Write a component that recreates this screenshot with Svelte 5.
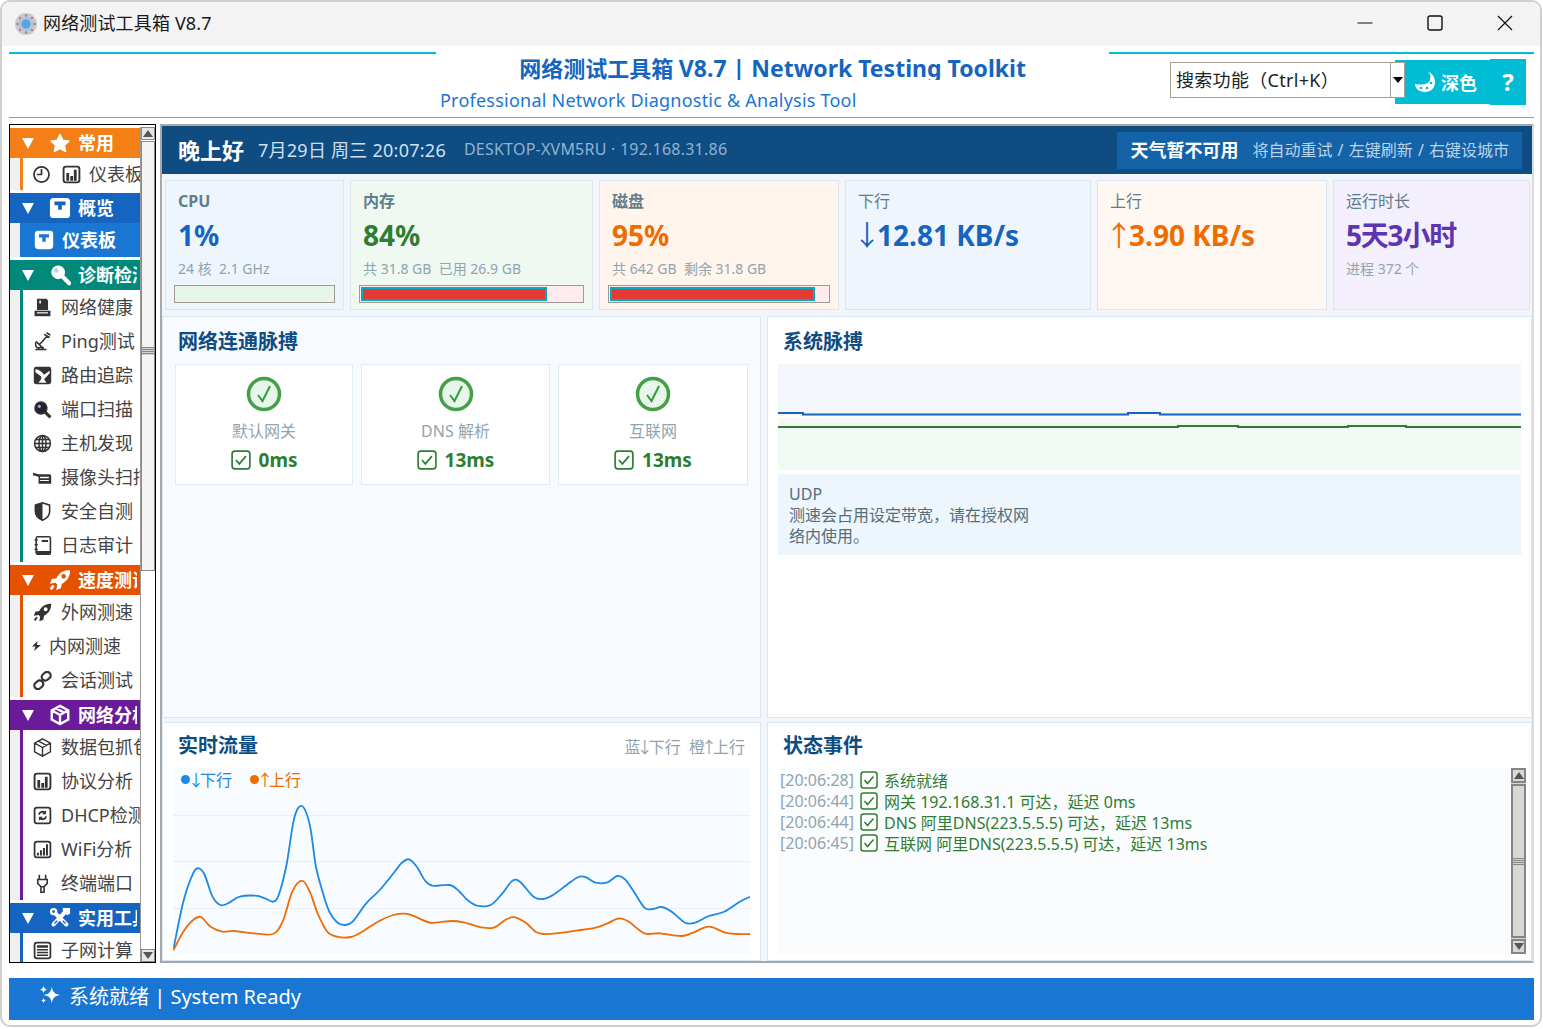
<script>
  const ICONS = {
    star: '<path fill="currentColor" stroke="currentColor" stroke-width="2" stroke-linejoin="round" d="M12 3l2.800 6.200 6.700.7-5 4.500 1.400 6.600L12 17.600 6.100 21l1.400-6.600-5-4.500 6.700-.7z"/>',
    box: '<path fill="currentColor" fill-rule="evenodd" d="M5 1h14a4 4 0 0 1 4 4v14a4 4 0 0 1-4 4H5a4 4 0 0 1-4-4V5a4 4 0 0 1 4-4zm1 4v4h4v5h4V9h4V5z"/>',
    search: '<circle cx="10" cy="9" r="7.500" fill="currentColor"/><circle cx="8" cy="7" r="2.500" fill="#b8d8d4"/><path d="M15 14l7 7" stroke="currentColor" stroke-width="4.500" stroke-linecap="round"/>',
    rocket: '<path fill="currentColor" fill-rule="evenodd" d="M23 1c-7 0-12 3-15 9l-5 1-2 5 6-1 2 2-1 6 5-2 1-5c6-3 9-8 9-15zm-7 4.500a2.500 2.500 0 1 1 0 5 2.500 2.500 0 0 1 0-5z"/><path d="M5 18l-3 4" stroke="currentColor" stroke-width="3"/>',
    cube: '<path fill="none" stroke="currentColor" stroke-width="2.600" d="M12 2l9 5v10l-9 5-9-5V7zM3 7l9 5 9-5M12 12v10M7.500 4.500l9 5"/>',
    tools: '<path fill="none" stroke="currentColor" stroke-width="4.500" stroke-linecap="round" d="M6 6l13 13M19 4L5 19"/><circle cx="5" cy="5" r="4" fill="currentColor"/><path fill="currentColor" d="M15 1h8v6l-3 2-5-5z"/><circle cx="5" cy="5" r="1.500" fill="#1565c0"/><path stroke="#1565c0" stroke-width="1.500" d="M9 15l-3 3M15 15l3 3"/>',
    clock: '<circle cx="12" cy="12" r="9.500" fill="none" stroke="currentColor" stroke-width="2.200"/><path d="M12 5v7H6" fill="none" stroke="currentColor" stroke-width="2.200"/>',
    bars: '<rect x="2" y="2" width="20" height="20" rx="3" fill="#fff" stroke="currentColor" stroke-width="2.400"/><path fill="currentColor" d="M5.500 10h3.500v10H5.500zM10.500 14h3.500v6h-3.500zM15 6h3.500v14H15z"/>',
    disk: '<path fill="currentColor" d="M5 1h12l2 2v12H5z"/><path fill="#fff" d="M8 3h2v4H8z"/><path fill="currentColor" d="M2 16h20v7H2z"/><path fill="#fff" d="M5 18h14v1.500H5z"/>',
    dish: '<path fill="none" stroke="currentColor" stroke-width="2" d="M4 12l9 9M4 12c-2 5 0 8 3 8s6-2 6 1M8 16L18 5M3 22h14M14 3l7 4M17 1l5 3"/>',
    pic: '<rect x="1" y="1" width="22" height="22" rx="3" fill="currentColor"/><path fill="#fff" d="M3 4c6 1 9 4 11 7l7-5v3l-9 10-2-6-7-5z"/><path fill="#fff" d="M12 14l-5 7h10z"/>',
    mag: '<circle cx="10" cy="10" r="7.500" fill="#223" stroke="currentColor" stroke-width="2"/><circle cx="8" cy="8" r="2" fill="#aab"/><path d="M15 15l7 7" stroke="currentColor" stroke-width="4"/>',
    globe: '<g fill="none" stroke="currentColor" stroke-width="1.900"><circle cx="12" cy="12" r="10"/><ellipse cx="12" cy="12" rx="4.500" ry="10"/><path d="M12 2v20M2 12h20M3.500 7h17M3.500 17h17"/></g>',
    cam: '<path fill="currentColor" d="M0 6l7 2h14a2 2 0 0 1 2 2v10H7v-9L0 9z"/><path fill="#fff" d="M9 11h11v2H9zM9 15h11v1.500H9z"/>',
    shield: '<path fill="#fff" stroke="currentColor" stroke-width="2" d="M12 1l9 3v8c0 5-4 9-9 11-5-2-9-6-9-11V4z"/><path fill="currentColor" d="M12 1v22c-5-2-9-6-9-11V4z"/>',
    book: '<rect x="4" y="1" width="18" height="22" rx="2" fill="none" stroke="currentColor" stroke-width="2"/><path fill="currentColor" d="M11 5h8v2.500h-8zM2 4h4v2H2zM2 10h4v2H2zM2 16h4v2H2zM5 19h17v4H5z"/>',
    rocketd: '<path fill="currentColor" fill-rule="evenodd" d="M23 1c-7 0-12 3-15 9l-5 1-2 5 6-1 2 2-1 6 5-2 1-5c6-3 9-8 9-15zm-7 4.500a2.500 2.500 0 1 1 0 5 2.500 2.500 0 0 1 0-5z"/><path d="M5 18l-3 4" stroke="currentColor" stroke-width="2.400"/>',
    bolt: '<path fill="currentColor" d="M13 2L2 13h7l-3 9 14-12h-8z"/>',
    link: '<g fill="none" stroke="currentColor" stroke-width="2.800"><rect x="11" y="2" width="12" height="9" rx="4.500" transform="rotate(-40 17 7)"/><rect x="1" y="13" width="12" height="9" rx="4.500" transform="rotate(-40 7 17)"/></g>',
    cubed: '<path fill="none" stroke="currentColor" stroke-width="1.800" d="M12 1l10 5.500v11L12 23 2 17.500v-11zM2 6.500L12 12l10-5.500M12 12v11M7 3.800l10 5.500"/>',
    sync: '<rect x="2" y="2" width="20" height="20" rx="3" fill="#fff" stroke="currentColor" stroke-width="2.200"/><path fill="none" stroke="currentColor" stroke-width="2.400" d="M7.500 11a4.500 4.500 0 0 1 8-2M16.500 13a4.500 4.500 0 0 1-8 2"/><path fill="currentColor" d="M16.500 5.500v5h-5zM7.500 18.500v-5h5z"/>',
    signal: '<rect x="2" y="2" width="20" height="20" rx="3" fill="#fff" stroke="currentColor" stroke-width="2.200"/><path fill="currentColor" d="M5 16h2.500v3.500H5zM8.800 13h2.500v6.500H8.800zM12.600 10h2.500v9.500h-2.500zM16.400 5.500h2.500v14h-2.500z"/>',
    plug: '<path fill="none" stroke="currentColor" stroke-width="2" d="M8 1v6M16 1v6M6 7h12v5l-4 4h-4l-4-4zM10 16v7h4v-7"/>',
    table: '<rect x="2" y="2" width="20" height="20" rx="3" fill="#fff" stroke="currentColor" stroke-width="2.200"/><path fill="currentColor" d="M5 5.500h14v3H5zM5 10h14v2H5zM5 13.500h14v2H5zM5 17h14v2H5z"/>'
  };

  const groups = [
    { name: "常用", color: "#f57f17", icon: "star", items: [{ t: "仪表板", ic: "bars", pre: "clock" }] },
    { name: "概览", color: "#1565c0", icon: "box", items: [{ t: "仪表板", ic: "box", active: true }] },
    { name: "诊断检测", color: "#00897b", icon: "search", items: [
      { t: "网络健康", ic: "disk" }, { t: "Ping测试", ic: "dish" }, { t: "路由追踪", ic: "pic" },
      { t: "端口扫描", ic: "mag" }, { t: "主机发现", ic: "globe" }, { t: "摄像头扫描", ic: "cam" },
      { t: "安全自测", ic: "shield" }, { t: "日志审计", ic: "book" } ] },
    { name: "速度测试", color: "#e65100", icon: "rocket", items: [
      { t: "外网测速", ic: "rocketd" }, { t: "内网测速", ic: "bolt", small: true }, { t: "会话测试", ic: "link" } ] },
    { name: "网络分析", color: "#6a1b9a", icon: "cube", items: [
      { t: "数据包抓包", ic: "cubed" }, { t: "协议分析", ic: "bars" }, { t: "DHCP检测", ic: "sync" },
      { t: "WiFi分析", ic: "signal" }, { t: "终端端口", ic: "plug" } ] },
    { name: "实用工具", color: "#1565c0", icon: "tools", items: [{ t: "子网计算", ic: "table" }] }
  ];

  const stats = [
    { label: "CPU", val: "1%", cls: "blue", bg: "bg-blue", sub: "24 核  2.1 GHz", bar: 0, heavy: true },
    { label: "内存", val: "84%", cls: "green", bg: "bg-green", sub: "共 31.8 GB  已用 26.9 GB", bar: 84, heavy: true },
    { label: "磁盘", val: "95%", cls: "orange", bg: "bg-orange", sub: "共 642 GB  剩余 31.8 GB", bar: 94, heavy: true },
    { label: "下行", val: "12.81 KB/s", arrow: "↓", cls: "blue", bg: "bg-blue" },
    { label: "上行", val: "3.90 KB/s", arrow: "↑", cls: "orange", bg: "bg-peach" },
    { label: "运行时长", val: "5天3小时", cls: "purple", bg: "bg-purple", sub: "进程 372 个" }
  ];

  const pings = [
    { name: "默认网关", ms: "0ms" },
    { name: "DNS 解析", ms: "13ms" },
    { name: "互联网", ms: "13ms" }
  ];

  const events = [
    { time: "[20:06:28]", msg: "系统就绪" },
    { time: "[20:06:44]", msg: "网关 192.168.31.1 可达，延迟 0ms" },
    { time: "[20:06:44]", msg: "DNS 阿里DNS(223.5.5.5) 可达，延迟 13ms" },
    { time: "[20:06:45]", msg: "互联网 阿里DNS(223.5.5.5) 可达，延迟 13ms" }
  ];

  // points read off the reference, in screen pixels relative to the chart box
  const downRaw = [[35,670],[60,530],[85,445],[100,430],[115,450],[135,515],[155,540],[175,535],[205,515],[245,512],[270,520],[290,530],[305,510],[325,420],[345,280],[365,243],[385,300],[400,420],[415,490],[435,560],[455,592],[475,600],[495,590],[530,535],[565,495],[600,445],[620,415],[640,403],[660,425],[680,465],[700,482],[745,480],[770,500],[790,525],[815,542],[850,540],[880,505],[905,468],[925,470],[960,515],[985,522],[1010,510],[1045,480],[1075,456],[1095,457],[1120,473],[1150,472],[1175,453],[1195,463],[1215,495],[1245,548],[1265,552],[1290,546],[1315,560],[1350,593],[1375,593],[1410,573],[1450,560],[1490,530],[1517,515]];
  const upRaw = [[35,675],[60,620],[85,585],[105,576],[130,605],[160,620],[190,618],[240,625],[290,627],[315,590],[340,500],[365,467],[385,500],[405,565],[430,620],[455,635],[490,636],[520,620],[560,590],[600,570],[630,566],[650,572],[690,592],[715,592],[750,588],[780,592],[830,608],[860,607],[890,583],[912,577],[940,593],[965,620],[985,627],[1020,625],[1070,617],[1120,608],[1150,595],[1180,580],[1205,590],[1245,625],[1285,625],[1340,633],[1370,623],[1410,605],[1450,622],[1480,627],[1517,627]];

  function smooth(raw) {
    const p = raw.map(([x, y]) => [x / 2.57 + 160 - 173, y / 3 + 725 - 768]);
    let d = `M${p[0][0].toFixed(1)} ${p[0][1].toFixed(1)}`;
    for (let i = 0; i < p.length - 1; i++) {
      const a = p[Math.max(i - 1, 0)], b = p[i], c = p[i + 1], e = p[Math.min(i + 2, p.length - 1)];
      const c1 = [b[0] + (c[0] - a[0]) / 6, b[1] + (c[1] - a[1]) / 6];
      const c2 = [c[0] - (e[0] - b[0]) / 6, c[1] - (e[1] - b[1]) / 6];
      d += `C${c1[0].toFixed(1)} ${c1[1].toFixed(1)} ${c2[0].toFixed(1)} ${c2[1].toFixed(1)} ${c[0].toFixed(1)} ${c[1].toFixed(1)}`;
    }
    return d;
  }
  const downPath = smooth(downRaw);
  const upPath = smooth(upRaw);
</script>

{#snippet icon(name, size)}
  <svg class="ic" width={size} height={size} viewBox="0 0 24 24">{@html ICONS[name]}</svg>
{/snippet}

{#snippet tick(size)}
  <svg class="ic" width={size} height={size} viewBox="0 0 18 18">
    <rect x="1" y="1" width="16" height="16" rx="2.500" fill="#fff" stroke="#2e7d32" stroke-width="1.500"/>
    <path d="M4.500 9l3 3.500 6-7" fill="none" stroke="#2e7d32" stroke-width="1.500"/>
  </svg>
{/snippet}

{#snippet arrowUp()}
  <svg width="10" height="7" viewBox="0 0 10 7"><path d="M5 0l5 7H0z" fill="#555"/></svg>
{/snippet}

{#snippet arrowDown()}
  <svg width="10" height="7" viewBox="0 0 10 7"><path d="M0 0h10L5 7z" fill="#555"/></svg>
{/snippet}

<div class="window">
  <div class="titlebar">
    <svg class="logo" width="24" height="24" viewBox="0 0 24 24">
      <circle cx="12" cy="12" r="11" fill="#c3ccd6"/>
      <circle cx="12" cy="12" r="7.500" fill="#a9c6de"/>
      <circle cx="12" cy="12" r="4.500" fill="#5ba3d9"/>
      <g fill="#e06a6a">
        <circle cx="12" cy="3.500" r="1.200"/><circle cx="12" cy="20.500" r="1.200"/>
        <circle cx="3.500" cy="12" r="1.200"/><circle cx="20.500" cy="12" r="1.200"/>
        <circle cx="6" cy="6" r="1.200"/><circle cx="18" cy="6" r="1.200"/>
        <circle cx="6" cy="18" r="1.200"/><circle cx="18" cy="18" r="1.200"/>
      </g>
    </svg>
    <span class="wintitle">网络测试工具箱 V8.7</span>
    <div class="winbtns">
      <svg width="16" height="16" viewBox="0 0 16 16"><path d="M0.500 8h15" stroke="#111" stroke-width="1.200"/></svg>
      <svg width="16" height="16" viewBox="0 0 16 16"><rect x="1" y="1" width="14" height="14" rx="2" fill="none" stroke="#111" stroke-width="1.400"/></svg>
      <svg width="16" height="16" viewBox="0 0 16 16"><path d="M1 1l14 14M15 1L1 15" stroke="#111" stroke-width="1.200"/></svg>
    </div>
  </div>

  <div class="client">
    <header class="head">
      <div class="side-left"></div>
      <div class="brand">
        <div class="brand-title">网络测试工具箱 <span class="brand-latin">V8.7 | Network Testing Toolkit</span></div>
        <div class="brand-sub">Professional Network Diagnostic &amp; Analysis Tool</div>
      </div>
      <div class="side-right">
        <div class="combo">
          <span class="combo-text">搜索功能（Ctrl+K）</span>
          <span class="combo-btn"><svg width="10" height="6" viewBox="0 0 10 6"><path d="M0 0h10L5 6z" fill="#000"/></svg></span>
        </div>
        <div class="btn-theme">
          <svg width="24" height="24" viewBox="0 0 24 24"><path fill="#fff" d="M15 2c3 2 3 7 1 10-3 3-9 3-14 2 0 5 5 8 10 8 6 0 10-4 10-10 0-5-3-9-7-10z"/><circle cx="8" cy="18" r="1.300" fill="#00bcd4"/><circle cx="14" cy="18" r="1.300" fill="#00bcd4"/><circle cx="18" cy="13" r="1.300" fill="#00bcd4"/></svg>
          <span>深色</span>
        </div>
        <div class="btn-help">?</div>
      </div>
    </header>

    <div class="main">
      <nav class="sidebar">
        <div class="nav-list">
          {#each groups as g}
            <div class="grp" style="--c:{g.color}">
              <div class="grp-head">
                <svg class="tri" width="12" height="11" viewBox="0 0 12 11"><path d="M0 0h12L6 11z" fill="#fff"/></svg>
                {@render icon(g.icon, 22)}
                <span class="grp-name">{g.name}</span>
              </div>
              <div class="grp-items">
                {#each g.items as it}
                  {#if it.active}
                    <div class="item active">{@render icon(it.ic, 20)}<span>{it.t}</span></div>
                  {:else}
                    <div class="item" class:short={it.pre} class:small={it.small}>
                      {#if it.pre}{@render icon(it.pre, 19)}{/if}
                      {@render icon(it.ic, it.small ? 12 : 19)}
                      <span>{it.t}</span>
                    </div>
                  {/if}
                {/each}
              </div>
            </div>
          {/each}
        </div>
        <div class="vbar nav-bar">
          <div class="vbtn">{@render arrowUp()}</div>
          <div class="vthumb"><i></i></div>
          <div class="vrest"></div>
          <div class="vbtn">{@render arrowDown()}</div>
        </div>
      </nav>

      <section class="content">
        <div class="banner">
          <strong class="greet">晚上好</strong>
          <span class="clock">7月29日 周三 20:07:26</span>
          <span class="host">DESKTOP-XVM5RU · 192.168.31.86</span>
          <div class="weather">
            <strong>天气暂不可用</strong>
            <span>将自动重试 / 左键刷新 / 右键设城市</span>
          </div>
        </div>

        <div class="stats">
          {#each stats as s}
            <div class="stat {s.bg}">
              <div class="stat-label" class:heavy={s.heavy}>{s.label}</div>
              <div class="stat-val {s.cls}">{#if s.arrow}<span class="arr">{s.arrow}</span> {/if}{s.val}</div>
              {#if s.sub}<div class="stat-sub">{s.sub}</div>{/if}
              {#if s.bar !== undefined}
                <div class="track" class:ok={s.bar === 0}>
                  {#if s.bar > 0}<div class="fill" style="width:{s.bar}%"></div>{/if}
                </div>
              {/if}
            </div>
          {/each}
        </div>

        <div class="grid">
          <div class="panel tint">
            <h2>网络连通脉搏</h2>
            <div class="pings">
              {#each pings as p}
                <div class="ping">
                  <svg width="36" height="36" viewBox="0 0 36 36">
                    <circle cx="18" cy="18" r="15.500" fill="#e8f5e9" stroke="#43a047" stroke-width="3.500"/>
                    <path d="M12 19l4.500 6L24 10" fill="none" stroke="#2e9e3e" stroke-width="2"/>
                  </svg>
                  <div class="ping-name">{p.name}</div>
                  <div class="ping-ms">{@render tick(20)}<span>{p.ms}</span></div>
                </div>
              {/each}
            </div>
          </div>

          <div class="panel">
            <h2>系统脉搏</h2>
            <svg class="pulse" width="743" height="106" viewBox="0 0 743 106">
              <rect width="743" height="52" fill="#f4f7fc"/>
              <rect y="54" width="743" height="52" fill="#f2f8f2"/>
              <path d="M0 49H25V50.500H350V49H382V50.500H743" fill="none" stroke="#1565c0" stroke-width="2"/>
              <path d="M0 63H400V62H460V63H570V62H628V63H743" fill="none" stroke="#2e7d32" stroke-width="2"/>
            </svg>
            <div class="note">
              UDP<br/>
              <span class="note-text">测速会占用设定带宽，请在授权网络内使用。</span>
            </div>
          </div>

          <div class="panel">
            <div class="panel-head">
              <h2 class="low">实时流量</h2>
              <span class="hint">蓝<span class="na">↓</span>下行  橙<span class="na">↑</span>上行</span>
            </div>
            <div class="traffic">
              <div class="legend">
                <span class="lg-down"><i></i><span class="na">↓</span>下行</span>
                <span class="lg-up"><i></i><span class="na">↑</span>上行</span>
              </div>
              <svg width="577" height="186" viewBox="0 0 577 186">
                <path d="M0 47.500H577M0 93.500H577M0 140.500H577" stroke="#eaeff5" stroke-width="1"/>
                <path d={downPath} fill="none" stroke="#1e88e5" stroke-width="1.800"/>
                <path d={upPath} fill="none" stroke="#ef6c00" stroke-width="1.800"/>
              </svg>
            </div>
          </div>

          <div class="panel">
            <h2 class="low">状态事件</h2>
            <div class="log">
              <div class="log-lines">
                {#each events as e}
                  <div class="log-line">
                    <span class="log-time">{e.time}</span>
                    {@render tick(18)}
                    <span class="log-msg">{e.msg}</span>
                  </div>
                {/each}
              </div>
              <div class="vbar log-bar">
                <div class="vbtn">{@render arrowUp()}</div>
                <div class="vthumb"><i></i></div>
                <div class="vbtn">{@render arrowDown()}</div>
              </div>
            </div>
          </div>
        </div>
      </section>
    </div>

    <footer class="status">
      <svg width="22" height="22" viewBox="0 0 24 24"><path fill="#fff" d="M14 3c1 6 3 8 9 9-6 1-8 3-9 9-1-6-3-8-9-9 6-1 8-3 9-9zM5 2c.5 2.500 1.500 3.500 4 4-2.500.5-3.500 1.500-4 4-.5-2.500-1.500-3.500-4-4 2.500-.5 3.500-1.500 4-4zM5 15c.5 2 1 2.500 3 3-2 .5-2.500 1-3 3-.5-2-1-2.500-3-3 2-.5 2.500-1 3-3z"/></svg>
      <span>系统就绪 | System Ready</span>
    </footer>
  </div>
</div>

<style>
  :global(body) {
    margin: 0;
    background: #fff;
  }

  .window {
    box-sizing: border-box;
    height: 1027px;
    width: 1542px;
    border: 2px solid #cfcfcf;
    border-radius: 10px;
    overflow: hidden;
    display: flex;
    flex-direction: column;
    background: #fff;
    font-family: "Noto Sans", "Noto Sans CJK SC", sans-serif;
    color: #222;
  }

  .ic {
    flex: none;
    display: block;
  }

  .na {
    margin: 0 -4px;
  }

  .titlebar {
    height: 44px;
    flex: none;
    background: #f3f3f3;
    display: flex;
    align-items: center;
    padding-left: 12px;
  }

  .logo {
    margin-right: 5px;
    filter: blur(0.4px);
  }

  .wintitle {
    font-size: 18px;
    color: #1a1a1a;
    padding-bottom: 4px;
    letter-spacing: 0.15px;
  }

  .winbtns {
    margin-left: auto;
    margin-right: 27px;
    margin-bottom: 2px;
    display: flex;
    gap: 54px;
  }

  .client {
    flex: 1;
    min-height: 0;
    display: flex;
    flex-direction: column;
    padding: 0 6px 0 7px;
  }

  .head {
    height: 71px;
    flex: none;
    display: flex;
    border-bottom: 1px solid #999;
    margin-bottom: 6px;
  }

  .side-left {
    width: 427px;
    height: 6px;
    border-bottom: 2px solid #00bcd4;
    flex: none;
  }

  .brand {
    flex: 1;
    min-width: 0;
    padding-top: 7px;
  }

  .brand-title {
    height: 27px;
    line-height: 30px;
    overflow: hidden;
    text-align: center;
    font-size: 22px;
    font-weight: 700;
    color: #1565c0;
    white-space: nowrap;
  }

  .brand-latin {
    font-size: 23px;
  }

  .brand-sub {
    margin-top: 7px;
    padding-left: 4px;
    font-size: 18px;
    line-height: 26px;
    letter-spacing: 0.23px;
    color: #1976d2;
    white-space: nowrap;
  }

  .side-right {
    width: 425px;
    flex: none;
    box-sizing: border-box;
    border-top: 2px solid #00bcd4;
    margin-top: 6px;
    padding: 6px 8px 0 61px;
    display: flex;
    align-items: flex-start;
    height: 60px;
  }

  .combo {
    width: 235px;
    height: 36px;
    margin-top: 2px;
    flex: none;
    box-sizing: border-box;
    border: 1px solid #a59f98;
    background: #fff;
    display: flex;
    position: relative;
    z-index: 1;
    margin-right: -10px;
  }

  .combo-text {
    flex: 1;
    font-size: 18px;
    line-height: 34px;
    padding-left: 5px;
    letter-spacing: 0.3px;
    color: #222;
    white-space: nowrap;
  }

  .combo-btn {
    width: 13px;
    border-left: 1px solid #a59f98;
    display: flex;
    align-items: center;
    justify-content: center;
    background: #fff;
  }

  .btn-theme {
    width: 95px;
    height: 44px;
    background: #00bcd4;
    color: #fff;
    font-size: 18px;
    font-weight: 700;
    display: flex;
    align-items: center;
    gap: 4px;
    padding-left: 18px;
    box-sizing: border-box;
    flex: none;
  }

  .btn-help {
    width: 36px;
    height: 46px;
    margin-top: -1px;
    background: #00bcd4;
    color: #fff;
    font-size: 24px;
    font-weight: 700;
    line-height: 46px;
    text-align: center;
    flex: none;
  }

  .main {
    flex: none;
    height: 839px;
    display: flex;
    gap: 4px;
  }

  .sidebar {
    width: 147px;
    flex: none;
    box-sizing: border-box;
    border: 1px solid #000;
    display: flex;
    background: #fff;
    overflow: hidden;
  }

  .nav-list {
    width: 130px;
    flex: none;
    overflow: hidden;
    padding-top: 3px;
  }

  .grp {
    margin-bottom: 3px;
  }

  .grp-head {
    height: 30px;
    background: var(--c);
    color: #fff;
    display: flex;
    align-items: center;
    padding-left: 12px;
    font-size: 18px;
    font-weight: 700;
    white-space: nowrap;
    overflow: hidden;
    padding-right: 3px;
  }

  .tri {
    margin-right: 15px;
    flex: none;
  }

  .grp-name {
    margin-left: 7px;
    padding-bottom: 2px;
    flex: 1;
    min-width: 0;
    overflow: hidden;
  }

  .grp-items {
    padding-left: 10px;
    background: #f0f0f0;
  }

  .item {
    height: 34px;
    border-left: 3px solid var(--c);
    background: #fff;
    display: flex;
    align-items: center;
    padding-left: 10px;
    gap: 9px;
    font-size: 18px;
    color: #444;
    white-space: nowrap;
    overflow: hidden;
  }

  .item .ic {
    color: #333;
  }

  .item span {
    padding-bottom: 2px;
  }

  .item.short {
    height: 32px;
    padding-left: 9px;
    gap: 11px;
  }

  .item.short span {
    margin-left: -3px;
  }

  .item.small {
    gap: 6px;
    padding-left: 8px;
  }

  .item.active {
    background: #1976d2;
    border-left: 0;
    color: #fff;
    font-weight: 700;
    padding-left: 14px;
    gap: 8px;
  }

  .item.active .ic {
    color: #fff;
  }

  .vbar {
    width: 15px;
    flex: none;
    box-sizing: border-box;
    display: flex;
    flex-direction: column;
    gap: 1px;
  }

  .nav-bar {
    background: #fff;
    margin-top: 2px;
    border-left: 1px solid #999;
  }

  .vbtn {
    height: 13px;
    flex: none;
    box-sizing: border-box;
    border: 1px solid #8a8a8a;
    background: #e6e6e2;
    display: flex;
    align-items: center;
    justify-content: center;
  }

  .vthumb {
    flex: none;
    height: 430px;
    box-sizing: border-box;
    border: 1px solid #8a8a8a;
    background: #f4f4f2;
    position: relative;
  }

  .vthumb i {
    position: absolute;
    left: 0;
    right: 0;
    top: 48%;
    height: 8px;
    background: repeating-linear-gradient(#8a8a8a 0 1px, #d0d0d0 1px 2px);
  }

  .vrest {
    flex: 1;
  }

  .content {
    flex: 1;
    min-width: 0;
    box-sizing: border-box;
    border: 2px solid #a8a8a8;
    border-right-color: #dcdcdc;
    display: flex;
    flex-direction: column;
    background: #f2f6fb;
  }

  .banner {
    height: 48px;
    flex: none;
    box-sizing: border-box;
    background: #0f4c81;
    color: #fff;
    display: flex;
    align-items: center;
    padding: 0 10px 0 16px;
    white-space: nowrap;
  }

  .greet {
    font-size: 22px;
    margin-right: 14px;
    padding-bottom: 2px;
  }

  .clock {
    font-size: 18px;
    color: #cfe0f0;
    margin-right: 18px;
    letter-spacing: 0.25px;
    padding-bottom: 2px;
  }

  .host {
    font-size: 16px;
    color: #90b4d4;
    letter-spacing: 0.23px;
    padding-bottom: 2px;
  }

  .weather {
    margin-left: auto;
    height: 37px;
    background: #1463a8;
    display: flex;
    align-items: center;
    gap: 14px;
    padding: 0 13px;
    font-size: 16px;
    word-spacing: 1px;
    color: #b9d3ea;
  }

  .weather strong {
    font-size: 18px;
    color: #fff;
    padding-bottom: 2px;
  }

  .weather span {
    padding-bottom: 2px;
  }

  .stats {
    height: 130px;
    flex: none;
    margin-top: 6px;
    padding: 0 2px 0 3px;
    display: grid;
    grid-template-columns: 179px 243px 240px 246px 230px 197px;
    gap: 6px;
  }

  .stat {
    box-sizing: border-box;
    border: 1px solid #dbe6f2;
    padding: 8px 8px 0;
  }

  .bg-blue { background: #eef5fd; }
  .bg-green { background: #eff8f1; }
  .bg-orange { background: #fff5ec; }
  .bg-peach { background: #fff8f2; }
  .bg-purple { background: #f3effc; }

  .stat-label {
    font-size: 16px;
    line-height: 24px;
    color: #607d8b;
    padding-left: 4px;
  }

  .stat-label.heavy {
    font-weight: 700;
  }

  .stat-val {
    font-size: 28px;
    font-weight: 700;
    line-height: 38px;
    margin-top: 3px;
    padding-left: 4px;
    white-space: nowrap;
  }

  .arr {
    font-weight: 400;
    margin-left: -5px;
    margin-right: -4px;
  }

  .blue { color: #1565c0; }
  .green { color: #2e7d32; }
  .orange { color: #ef6c00; }
  .purple { color: #5e35b1; letter-spacing: -1.2px; }

  .stat-sub {
    font-size: 14px;
    line-height: 20px;
    margin-top: 5px;
    padding-left: 4px;
    color: #90a4ae;
    white-space: pre;
  }

  .track {
    height: 18px;
    margin-top: 6px;
    box-sizing: border-box;
    border: 1px solid #a09a95;
    background: #ffebee;
    padding: 1px;
  }

  .track.ok {
    background: #e8f5e9;
  }

  .fill {
    height: 100%;
    box-sizing: border-box;
    background: #e53935;
    border: 2px solid #00acc1;
  }

  .grid {
    flex: 1;
    min-height: 0;
    margin-top: 6px;
    display: grid;
    grid-template-columns: 599px 765px;
    grid-template-rows: 402px 1fr;
    column-gap: 6px;
    row-gap: 4px;
  }

  .panel {
    box-sizing: border-box;
    border: 1px solid #d9e6f5;
    background: #fff;
    padding: 0 10px;
    min-width: 0;
    overflow: hidden;
  }

  .panel.tint {
    background: #f7faff;
    padding: 0 12px;
  }

  h2 {
    margin: 0;
    height: 47px;
    line-height: 50px;
    font-size: 20px;
    font-weight: 700;
    color: #0f4c81;
    padding-left: 5px;
  }

  h2.low {
    height: 45px;
    line-height: 46px;
  }

  .tint h2 {
    padding-left: 3px;
  }

  .pings {
    display: grid;
    grid-template-columns: 178px 189px 190px;
    gap: 8px;
  }

  .ping {
    height: 121px;
    box-sizing: border-box;
    border: 1px solid #e1ebf7;
    background: #fff;
    display: flex;
    flex-direction: column;
    align-items: center;
    padding-top: 11px;
  }

  .ping-name {
    margin-top: 7px;
    font-size: 16px;
    line-height: 24px;
    color: #90a4ae;
  }

  .ping-ms {
    margin-top: 4px;
    display: flex;
    align-items: center;
    gap: 8px;
    font-size: 19px;
    font-weight: 700;
    line-height: 26px;
    color: #2e7d32;
  }

  .pulse {
    display: block;
  }

  .note {
    margin-top: 4px;
    height: 81px;
    box-sizing: border-box;
    background: #edf5fd;
    padding: 10px 11px 0;
    font-size: 16px;
    line-height: 21px;
    color: #546e7a;
  }

  .note-text {
    display: block;
    max-width: 245px;
  }

  .panel-head {
    display: flex;
    justify-content: space-between;
    align-items: baseline;
  }

  .hint {
    font-size: 16px;
    color: #90a4ae;
    white-space: pre;
    margin-right: 5px;
  }

  .traffic {
    position: relative;
    height: 186px;
    width: 577px;
    background: #f8fbff;
  }

  .traffic svg {
    display: block;
  }

  .legend {
    position: absolute;
    left: 8px;
    top: 1px;
    display: flex;
    gap: 18px;
    font-size: 16px;
    line-height: 22px;
  }

  .legend i {
    display: inline-block;
    width: 9px;
    height: 9px;
    border-radius: 50%;
    background: currentColor;
    margin-right: 2px;
    vertical-align: 2px;
  }

  .lg-down { color: #1e88e5; }
  .lg-up { color: #ef6c00; }

  .log {
    height: 186px;
    width: 748px;
    background: #fbfcfe;
    display: flex;
    justify-content: space-between;
  }

  .log-lines {
    padding: 1px 0 0 2px;
  }

  .log-line {
    display: flex;
    align-items: center;
    gap: 6px;
    height: 21px;
    font-size: 16px;
    white-space: nowrap;
  }

  .log-time {
    color: #90a4ae;
  }

  .log-msg {
    color: #2e7d32;
  }

  .log-bar {
    background: #d9d9d4;
  }

  .log-bar .vthumb {
    flex: 1;
    border: 2px solid #858585;
    background: #d9d9d4;
  }

  .log-bar .vbtn {
    height: 15px;
    border: 2px solid #858585;
    background: #d9d9d4;
  }

  .status {
    margin-top: 15px;
    height: 42px;
    flex: none;
    box-sizing: border-box;
    padding: 0 0 8px 30px;
    background: #1976d2;
    color: #fff;
    font-size: 20px;
    display: flex;
    align-items: center;
    gap: 8px;
    white-space: nowrap;
  }
</style>
